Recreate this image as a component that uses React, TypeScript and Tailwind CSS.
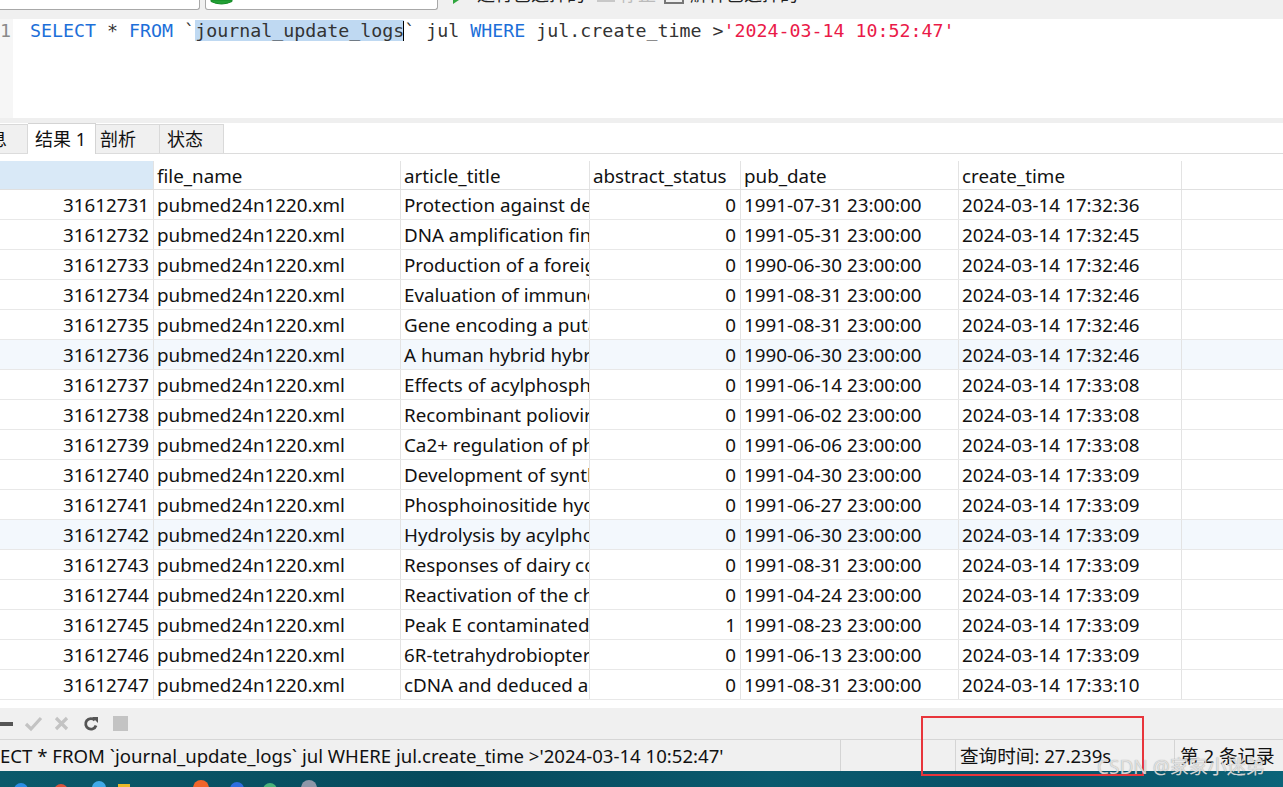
import React from "react";

const titles = [
  "Protection against detrimental effects of oxygen",
  "DNA amplification fingerprinting using very short",
  "Production of a foreign protein in plants",
  "Evaluation of immunoassays for detection",
  "Gene encoding a putative transcription factor",
  "A human hybrid hybridoma producing antibodies",
  "Effects of acylphosphatase on the activity",
  "Recombinant poliovirus vaccine candidates",
  "Ca2+ regulation of phosphorylase kinase",
  "Development of synthetic peptide vaccines",
  "Phosphoinositide hydrolysis in cultured cells",
  "Hydrolysis by acylphosphatase of the intermediate",
  "Responses of dairy cows to supplemental fat",
  "Reactivation of the chicken embryo genes",
  "Peak E contaminated preparations of insulin",
  "6R-tetrahydrobiopterin synthesis in the brain",
  "cDNA and deduced amino acid sequence",
];

const pubDates = [
  "1991-07-31", "1991-05-31", "1990-06-30", "1991-08-31", "1991-08-31", "1990-06-30",
  "1991-06-14", "1991-06-02", "1991-06-06", "1991-04-30", "1991-06-27", "1991-06-30",
  "1991-08-31", "1991-04-24", "1991-08-23", "1991-06-13", "1991-08-31",
];

const createTimes = [
  "17:32:36", "17:32:45", "17:32:46", "17:32:46", "17:32:46", "17:32:46",
  "17:33:08", "17:33:08", "17:33:08", "17:33:09", "17:33:09", "17:33:09",
  "17:33:09", "17:33:09", "17:33:09", "17:33:09", "17:33:10",
];

const rows = titles.map((t, i) => ({
  id: 31612731 + i,
  file: "pubmed24n1220.xml",
  title: t,
  status: i === 14 ? 1 : 0,
  pub: pubDates[i] + " 23:00:00",
  create: "2024-03-14 " + createTimes[i],
}));

function Cell({
  w,
  right,
  children,
}: {
  w: string;
  right?: boolean;
  children: React.ReactNode;
}) {
  return (
    <div
      className={`${w} shrink-0 h-full border-r border-[#e3e3e3] overflow-hidden whitespace-nowrap flex items-center pt-[2px] ${
        right ? "justify-end pr-[4px]" : "pl-[3px]"
      }`}
    >
      {children}
    </div>
  );
}

export default function App() {
  return (
    <div className="relative w-[1283px] h-[787px] overflow-hidden bg-white text-[#111] font-['Noto_Sans','Noto_Sans_CJK_SC',sans-serif]">
      {/* top toolbar (cut off) */}
      <div className="h-[19px] bg-[#f0f0f0] flex items-start overflow-hidden">
        <div className="w-[200px] h-[10px] bg-white border-r border-b border-[#a8a8a8] rounded-br-[3px] shrink-0" />
        <div className="ml-[5px] w-[233px] h-[10px] bg-white border border-t-0 border-[#a8a8a8] rounded-b-[3px] shrink-0 pl-[4px]">
          <svg width="23" height="6" viewBox="0 0 23 6">
            <path d="M1 0 L1 1.5 Q11.5 6.5 22 1.5 L22 0 Z" fill="#22a035" stroke="#128a25" strokeWidth="1" />
          </svg>
        </div>
        <svg className="ml-[15px] shrink-0" width="7" height="4" viewBox="0 0 7 4">
          <path d="M0 0 L6 0 L0 4 Z" fill="#2fa63e" />
        </svg>
        <div className="ml-[17px] h-[4px] overflow-hidden shrink-0">
          <div className="-mt-[15px] text-[18px] leading-[18px] whitespace-nowrap text-[#222]">运行已选择的</div>
        </div>
        <div className="ml-[12px] w-[18px] h-[2px] bg-[#c8c8c8] shrink-0" />
        <div className="ml-[5px] h-[4px] overflow-hidden shrink-0">
          <div className="-mt-[15px] text-[18px] leading-[18px] whitespace-nowrap text-[#bbb]">停止</div>
        </div>
        <div className="ml-[8px] w-[20px] h-[4px] border-b-2 border-x-2 border-[#777] shrink-0" />
        <div className="ml-[6px] h-[4px] overflow-hidden shrink-0">
          <div className="-mt-[15px] text-[18px] leading-[18px] whitespace-nowrap text-[#222]">解释已选择的</div>
        </div>
      </div>

      {/* editor */}
      <div className="h-[99px] flex">
        <div className="w-[13px] bg-[#f6f6f6] shrink-0 text-right pr-[4px] font-['DejaVu_Sans_Mono',monospace] text-[18.3px] leading-[24px] text-[#8a8a8a] overflow-hidden">
          1
        </div>
        <div className="pl-[17px] font-['DejaVu_Sans_Mono',monospace] text-[18.3px] leading-[24px] whitespace-nowrap text-[#333]">
          <span className="text-[#1d6fd9]">SELECT</span> * <span className="text-[#1d6fd9]">FROM</span> `
          <span className="bg-[#bfd9f2]">journal_update_logs</span>
          <span className="inline-block w-[1px] h-[20px] bg-black align-[-4px] -ml-[1px]" />` jul{" "}
          <span className="text-[#1d6fd9]">WHERE</span> jul.create_time &gt;
          <span className="text-[#ea1a48]">'2024-03-14 10:52:47'</span>
        </div>
      </div>

      {/* separator */}
      <div className="h-[5px] bg-[#efefef]" />

      {/* tabs */}
      <div className="h-[31px] flex items-end border-b border-[#dcdcdc] text-[18px]">
        <div className="w-[28px] h-[29px] bg-[#f0f0f0] border-r border-t border-[#d9d9d9] flex items-center justify-end pr-[20px] pt-[1px] overflow-hidden whitespace-nowrap shrink-0">
          信息
        </div>
        <div className="w-[68px] h-[31px] bg-white border-t border-r border-[#d4d4d4] -mb-[1px] flex items-center pl-[7px] pt-[1px] whitespace-nowrap shrink-0">
          结果 1
        </div>
        <div className="w-[64px] h-[29px] bg-[#f0f0f0] border-t border-r border-[#d9d9d9] flex items-center pl-[4px] pt-[1px] shrink-0">
          剖析
        </div>
        <div className="w-[64px] h-[29px] bg-[#f0f0f0] border-t border-r border-[#d9d9d9] flex items-center pl-[7px] pt-[1px] shrink-0">
          状态
        </div>
      </div>

      {/* gap */}
      <div className="h-[7px]" />

      {/* table */}
      <div className="text-[18.8px] text-[#111]">
        <div className="h-[29px] flex border-b border-[#e0e0e0]">
          <div className="w-[154px] shrink-0 h-full bg-[#d9e9f7] border-r border-[#e3e3e3]" />
          <Cell w="w-[247px]">file_name</Cell>
          <Cell w="w-[189px]">article_title</Cell>
          <Cell w="w-[151px]">abstract_status</Cell>
          <Cell w="w-[218px]">pub_date</Cell>
          <Cell w="w-[223px]">create_time</Cell>
        </div>
        {rows.map((r, i) => (
          <div
            key={r.id}
            className={`h-[30px] flex border-b border-[#e8e8e8] ${
              i === 5 || i === 11 ? "bg-[#f3f8fd]" : ""
            }`}
          >
            <Cell w="w-[154px]" right>
              {r.id}
            </Cell>
            <Cell w="w-[247px]">{r.file}</Cell>
            <Cell w="w-[189px]">{r.title}</Cell>
            <Cell w="w-[151px]" right>
              {r.status}
            </Cell>
            <Cell w="w-[218px]">{r.pub}</Cell>
            <Cell w="w-[223px]">{r.create}</Cell>
          </div>
        ))}
      </div>

      {/* gap */}
      <div className="h-[8px]" />

      {/* bottom toolbar */}
      <div className="h-[32px] bg-[#f0f0f0] flex items-center border-b border-[#d6d6d6]">
        <div className="w-[13px] h-[4px] bg-[#555] shrink-0" />
        <svg className="ml-[11px] shrink-0" width="19" height="16" viewBox="0 0 19 16">
          <path d="M2 8 L7 13 L17 2" fill="none" stroke="#c3c3c3" strokeWidth="3.2" />
        </svg>
        <svg className="ml-[11px] shrink-0" width="15" height="15" viewBox="0 0 15 15">
          <path d="M2 2 L13 13 M13 2 L2 13" fill="none" stroke="#c3c3c3" strokeWidth="3.2" />
        </svg>
        <svg className="ml-[14px] shrink-0" width="16" height="16" viewBox="0 0 16 16">
          <path d="M13 9.5 A5.3 5.3 0 1 1 11.8 4.2" fill="none" stroke="#555" strokeWidth="2.8" />
          <path d="M9 1 L15 1 L15 7 Z" fill="#555" />
        </svg>
        <div className="ml-[14px] w-[15px] h-[15px] bg-[#c3c3c3] shrink-0" />
      </div>

      {/* status bar */}
      <div className="h-[31px] bg-[#f0f0f0] flex text-[18.6px] text-[#111] whitespace-nowrap">
        <div className="w-[841px] shrink-0 border-r border-[#d4d4d4] flex items-center pt-[1px] overflow-hidden">
          ECT * FROM `journal_update_logs` jul WHERE jul.create_time &gt;'2024-03-14 10:52:47'
        </div>
        <div className="w-[115px] shrink-0 border-r border-[#d4d4d4]" />
        <div className="w-[219px] shrink-0 border-r border-[#d4d4d4] flex items-center pl-[4px] pt-[1px]">
          查询时间: 27.239s
        </div>
        <div className="flex items-center pl-[5px] pt-[1px]">第 2 条记录</div>
      </div>

      {/* taskbar */}
      <div className="h-[16px] bg-[linear-gradient(90deg,#0b5a6b_0%,#064a5c_35%,#0a5a6e_60%,#075066_80%,#0b6479_100%)] relative overflow-hidden">
        <div className="absolute left-[14px] top-[12px] w-[14px] h-[14px] rounded-full bg-[#2b8ee6]" />
        <div className="absolute left-[54px] top-[13px] w-[14px] h-[14px] rounded-full bg-[#d9533b]" />
        <div className="absolute left-[92px] top-[10px] w-[14px] h-[14px] rounded-full bg-[#3fa9e8]" />
        <div className="absolute left-[118px] top-[13px] w-[12px] h-[12px] bg-[#e8b92a]" />
        <div className="absolute left-[193px] top-[9px] w-[16px] h-[16px] rounded-full bg-[#f0652a]" />
        <div className="absolute left-[230px] top-[11px] w-[14px] h-[14px] rounded-full bg-[#2d6ee0]" />
        <div className="absolute left-[263px] top-[12px] w-[14px] h-[14px] rounded-full bg-[#4ab27a]" />
        <div className="absolute left-[301px] top-[9px] w-[16px] h-[16px] rounded-full bg-[#8d97a8]" />
      </div>

      {/* red highlight box */}
      <div className="absolute left-[921px] top-[716px] w-[223px] h-[60px] border-2 border-[#e8353b]" />

      {/* watermark */}
      <div className="absolute left-[1097px] top-[755px] text-[19px] leading-[24px] whitespace-nowrap text-[rgba(235,235,235,0.85)] [text-shadow:0_0_1px_rgba(90,90,90,0.6)]">
        CSDN @家家小迷弟
      </div>
    </div>
  );
}
